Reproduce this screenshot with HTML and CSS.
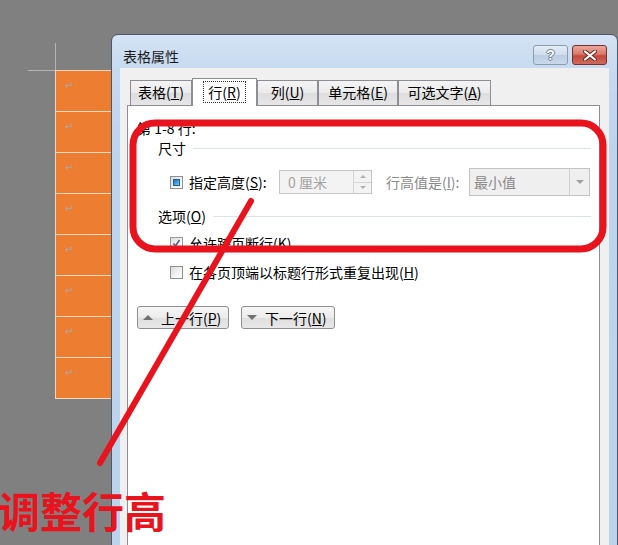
FILE: index.html
```html
<!DOCTYPE html>
<html lang="zh-CN">
<head>
    <meta charset="UTF-8">
    <meta name="viewport" content="width=device-width, initial-scale=1.0">
    <title>表格属性</title>
    <link rel="stylesheet" href="styles.css">
</head>
<body>
    <div class="page">
        <div class="crop"></div>
        <div class="cells">
            <div class="cell">↵</div>
            <div class="cell">↵</div>
            <div class="cell">↵</div>
            <div class="cell">↵</div>
            <div class="cell">↵</div>
            <div class="cell">↵</div>
            <div class="cell">↵</div>
            <div class="cell">↵</div>
        </div>
    </div>

    <div class="window">
        <div class="titlebar">
            <span class="title">表格属性</span>
            <div class="caption-buttons">
                <div class="cap-btn help"><span>?</span></div>
                <div class="cap-btn close">
                    <svg width="14" height="11" viewBox="0 0 14 11">
                        <path d="M2 1.5 L12 9.5 M12 1.5 L2 9.5" stroke="#6b2621" stroke-width="4" stroke-linecap="round"/>
                        <path d="M2 1.5 L12 9.5 M12 1.5 L2 9.5" stroke="#ffffff" stroke-width="2.2" stroke-linecap="round"/>
                    </svg>
                </div>
            </div>
        </div>
        <div class="client">
            <div class="tabs">
                <div class="tab w1">表格(<u>T</u>)</div>
                <div class="tab active w2"><span class="focus">行(<u>R</u>)</span></div>
                <div class="tab w3">列(<u>U</u>)</div>
                <div class="tab w4">单元格(<u>E</u>)</div>
                <div class="tab w5">可选文字(<u>A</u>)</div>
            </div>
            <div class="panel">
                <div class="caption">第 1-8 行:</div>
                <div class="group-head"><span>尺寸</span><i class="rule"></i></div>
                <div class="size-row">
                    <span class="check mixed"></span>
                    <span class="label-a">指定高度(<u>S</u>):</span>
                    <div class="spin-box">
                        <span class="spin-text">0 厘米</span>
                        <div class="spin">
                            <span class="spin-up"></span>
                            <span class="spin-down"></span>
                        </div>
                    </div>
                    <span class="label-b">行高值是(<u>I</u>):</span>
                    <div class="combo">
                        <span class="combo-text">最小值</span>
                        <span class="combo-arrow"></span>
                    </div>
                </div>
                <div class="group-head second"><span>选项(<u>O</u>)</span><i class="rule"></i></div>
                <div class="check-row first">
                    <span class="check on">
                        <svg width="11" height="11" viewBox="0 0 11 11">
                            <path d="M2.5 5.5 L4.5 8 L8.5 2" fill="none" stroke="#4d6185" stroke-width="1.6"/>
                        </svg>
                    </span>
                    允许跨页断行(<u>K</u>)
                </div>
                <div class="check-row">
                    <span class="check"></span>
                    在各页顶端以标题行形式重复出现(<u>H</u>)
                </div>
                <div class="nav-buttons">
                    <button class="nav-btn prev"><i class="tri up"></i>上一行(<u>P</u>)</button>
                    <button class="nav-btn next"><i class="tri down"></i>下一行(<u>N</u>)</button>
                </div>
            </div>
        </div>
    </div>

    <svg class="markup" width="618" height="545" viewBox="0 0 618 545">
        <rect x="133" y="123" width="470" height="126" rx="22" fill="none" stroke="#e8131d" stroke-width="7"/>
        <line x1="251" y1="201" x2="100" y2="463" stroke="#e8131d" stroke-width="6" stroke-linecap="round"/>
    </svg>
    <div class="note">调整行高</div>
</body>
</html>
```

FILE: styles.css
```css
body {
    margin: 0;
    width: 618px;
    height: 545px;
    overflow: hidden;
    position: relative;
    background-color: #808080;
    font-family: "Noto Sans CJK SC", "Liberation Sans", sans-serif;
}

/* document behind the dialog */
.page {
    padding: 43px 0 0 28px;
}
.crop {
    width: 27px;
    height: 27px;
    border-right: 1px solid #b4b4b4;
    border-bottom: 1px solid #b4b4b4;
}
.cells {
    margin: -1px 0 0 27px;
    width: 60px;
    border-left: 1px solid #f6d2b8;
    border-top: 1px solid #f6d2b8;
}
.cell {
    height: 41px;
    box-sizing: border-box;
    background-color: #ed7d31;
    border-bottom: 1px solid #f8d8c2;
    color: #a9a9a9;
    font-family: "DejaVu Sans", sans-serif;
    font-size: 10px;
    line-height: 12px;
    padding: 9px 0 0 9px;
}

/* dialog window */
.window {
    position: absolute;
    left: 111px;
    top: 34px;
    width: 507px;
    height: 530px;
    box-sizing: border-box;
    border: 1px solid #4a5868;
    border-radius: 7px 7px 0 0;
    background: linear-gradient(to bottom, #d5e3f4 0, #c6daf0 34px, #bdd4ee 120px, #bcd3ed 100%);
}
.titlebar {
    height: 33px;
    display: flex;
    align-items: flex-start;
    padding: 0 10px 0 11px;
}
.title {
    padding-top: 11px;
    font-size: 14px;
    line-height: 20px;
    color: #1b1b1b;
}
.caption-buttons {
    margin-left: auto;
    margin-top: 10px;
    display: flex;
    gap: 4px;
}
.cap-btn {
    width: 35px;
    height: 20px;
    box-sizing: border-box;
    border-radius: 3px;
    display: flex;
    align-items: center;
    justify-content: center;
}
.help {
    border: 1px solid #8c9cb0;
    background: linear-gradient(to bottom, #e4edf7 0, #cfdcec 50%, #bccde2 51%, #c9d8ea 100%);
}
.help span {
    font-family: "Liberation Sans", sans-serif;
    font-weight: 700;
    font-size: 14px;
    line-height: 14px;
    color: #ffffff;
    text-shadow: 0 0 1px #5f6f82, 1px 0 0 #7a889a, -1px 0 0 #7a889a, 0 1px 0 #7a889a, 0 -1px 0 #7a889a;
}
.close {
    border: 1px solid #7a2f2a;
    background: linear-gradient(to bottom, #e9a799 0, #d77a6c 45%, #c24a3c 55%, #d26b5c 100%);
}

.client {
    margin: 0 8px;
    height: 480px;
    background-color: #f0f0f0;
    padding: 10px 9px 0 7px;
}

/* tabs */
.tabs {
    display: flex;
    align-items: flex-end;
    height: 27px;
    margin-left: 3px;
    position: relative;
    z-index: 1;
}
.tab {
    height: 25px;
    box-sizing: border-box;
    border: 1px solid #8c8e94;
    border-bottom: none;
    background: linear-gradient(to bottom, #f4f4f4 0, #ebebeb 50%, #dedede 51%, #e6e6e6 100%);
    font-size: 14px;
    line-height: 23px;
    color: #000;
    text-align: center;
}
.tab.active {
    height: 28px;
    margin-bottom: -1px;
    background: #ffffff;
    line-height: 24px;
    padding-top: 1px;
}
.w1 { width: 62px; }
.w2 { width: 65px; }
.w3 { width: 61px; }
.w4 { width: 80px; }
.w5 { width: 93px; }
.focus {
    display: inline-block;
    border: 1px dotted #333;
    padding: 0 4px;
    line-height: 20px;
}

/* tab panel */
.panel {
    height: 460px;
    background-color: #ffffff;
    border: 1px solid #8c8e94;
    padding: 12px 8px 0 9px;
    font-size: 14px;
    line-height: 20px;
    color: #000;
}
.caption {
    height: 20px;
}
.group-head {
    display: flex;
    align-items: center;
    height: 20px;
    margin-left: 21px;
}
.group-head.second {
    margin-top: 10px;
}
.rule {
    flex: 1;
    height: 1px;
    background-color: #dde3ea;
    margin-left: 7px;
}

.size-row {
    display: flex;
    align-items: center;
    height: 28px;
    margin: 10px 0 0 33px;
}
.label-a {
    width: 90px;
}
.label-b {
    width: 83px;
    margin-left: 14px;
    color: #8a8a8a;
}
.check {
    flex: none;
    width: 13px;
    height: 13px;
    box-sizing: border-box;
    border: 1px solid #8f8f8f;
    background: linear-gradient(135deg, #dcdcdc 0, #f4f4f4 60%, #ffffff 100%);
    margin-right: 6px;
    display: flex;
    align-items: center;
    justify-content: center;
}
.check.mixed::after {
    content: "";
    width: 7px;
    height: 7px;
    box-sizing: border-box;
    border: 1px solid #1d5f94;
    background: linear-gradient(135deg, #1f78c2 0, #4ea3dc 60%, #86cdf0 100%);
}
.check.on {
    border-color: #9a9a9a;
}

.spin-box {
    display: flex;
    width: 93px;
    height: 24px;
    box-sizing: border-box;
    border: 1px solid #c6c6c6;
    background-color: #f3f3f3;
}
.spin-text {
    flex: 1;
    padding-left: 8px;
    line-height: 22px;
    color: #a3a3a3;
}
.spin {
    width: 17px;
    display: flex;
    flex-direction: column;
    border-left: 1px solid #d4d4d4;
}
.spin span {
    flex: 1;
    display: flex;
    align-items: center;
    justify-content: center;
}
.spin-up {
    border-bottom: 1px solid #d4d4d4;
}
.spin-up::after {
    content: "";
    border-left: 3px solid transparent;
    border-right: 3px solid transparent;
    border-bottom: 3px solid #b0b0b0;
}
.spin-down::after {
    content: "";
    border-left: 3px solid transparent;
    border-right: 3px solid transparent;
    border-top: 3px solid #b0b0b0;
}

.combo {
    display: flex;
    width: 121px;
    height: 28px;
    box-sizing: border-box;
    border: 1px solid #c3c3c3;
    background-color: #efefef;
}
.combo-text {
    flex: 1;
    padding-left: 4px;
    line-height: 26px;
    color: #8a8a8a;
}
.combo-arrow {
    width: 19px;
    border-left: 1px solid #d0d0d0;
    display: flex;
    align-items: center;
    justify-content: center;
}
.combo-arrow::after {
    content: "";
    border-left: 4px solid transparent;
    border-right: 4px solid transparent;
    border-top: 4px solid #a0a0a0;
}

.check-row {
    display: flex;
    align-items: center;
    height: 20px;
    margin: 9px 0 0 33px;
}
.check-row.first {
    margin-top: 7px;
}

.nav-buttons {
    display: flex;
    gap: 12px;
    margin-top: 24px;
}
.nav-btn {
    height: 23px;
    box-sizing: border-box;
    border: 1px solid #8f8f8f;
    border-radius: 3px;
    background: linear-gradient(to bottom, #f6f6f6 0, #ececec 50%, #dfdfdf 51%, #e8e8e8 100%);
    font-family: inherit;
    font-size: 14px;
    line-height: 20px;
    color: #000;
    padding: 0 0 0 5px;
    display: flex;
    align-items: center;
}
.prev { width: 92px; }
.next { width: 94px; }
.tri {
    width: 0;
    height: 0;
    border-left: 5px solid transparent;
    border-right: 5px solid transparent;
    margin-right: 8px;
}
.tri.up {
    border-bottom: 5px solid #707070;
}
.tri.down {
    border-top: 5px solid #707070;
}

/* red annotation */
.markup {
    position: absolute;
    left: 0;
    top: 0;
}
.note {
    position: absolute;
    left: -2px;
    top: 489px;
    font-size: 42px;
    line-height: 42px;
    font-weight: 700;
    color: #e8131d;
    white-space: nowrap;
}
```
